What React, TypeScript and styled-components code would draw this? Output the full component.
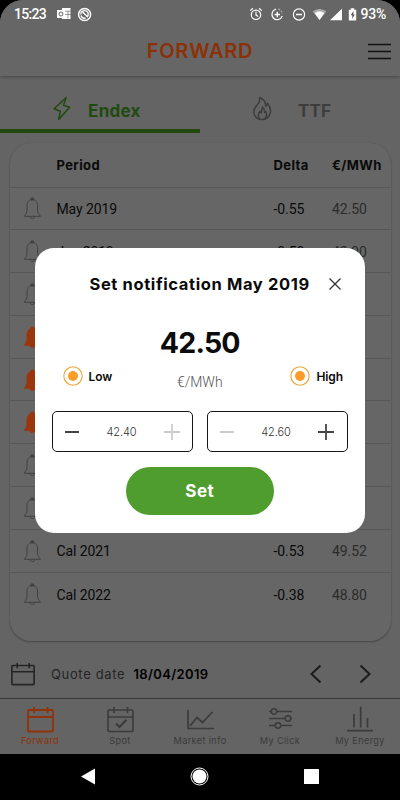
import React from "react";
import styled, { createGlobalStyle } from "styled-components";

const GlobalStyle = createGlobalStyle`
  * { box-sizing: border-box; }
  body { margin: 0; background: #000; font-family: Inter, sans-serif; }
`;

const Phone = styled.div`
  position: relative;
  width: 400px;
  height: 800px;
  overflow: hidden;
  background: #000;
  display: flex;
  flex-direction: column;
  white-space: nowrap;
`;

const Screen = styled.div`
  height: 753.5px;
  background: #646464;
  border-radius: 23px 23px 0 0;
  overflow: hidden;
  display: flex;
  flex-direction: column;
`;

const Top = styled.header`
  flex: none;
  height: 76px;
  background: #666;
  box-shadow: 0 1px 3px rgba(0, 0, 0, 0.3);
`;

const StatusBar = styled.div`
  height: 28px;
  padding: 0 14px;
  display: flex;
  align-items: center;
  color: #fff;
  font: 500 14px Roboto, sans-serif;
  svg { display: block; flex: none; }
`;

const Clock = styled.span`
  width: 43px;
  letter-spacing: -0.7px;
  font-size: 14px;
`;

const StatusIcons = styled.div`
  display: flex;
  align-items: center;
`;

const Battery = styled.span`
  padding-left: 3px;
  letter-spacing: -0.2px;
`;

const StatusRight = styled(StatusIcons)`
  margin-left: auto;
`;

const TitleRow = styled.div`
  height: 47px;
  display: grid;
  grid-template-columns: 1fr auto 1fr;
  align-items: center;
  padding: 0 9px;
  svg { justify-self: end; display: block; }
`;

const Title = styled.h1`
  grid-column: 2;
  margin: -2px 0 0;
  font: 600 20px Inter, sans-serif;
  letter-spacing: 0.75px;
  color: #8c3008;
`;

const Tabs = styled.nav`
  flex: none;
  height: 57px;
  display: grid;
  grid-template-columns: 200px 200px;
`;

const Tab = styled.div<{ $active?: boolean }>`
  display: flex;
  align-items: center;
  padding-left: 51px;
  padding-top: 12px;
  border-bottom: 4px solid ${(p) => (p.$active ? "#22490f" : "transparent")};
  color: ${(p) => (p.$active ? "#204a0f" : "#3d3d3d")};
  font-weight: 700;
  font-size: 17px;
  svg { display: block; margin-top: -1px; }
`;

const TabLabel = styled.span<{ $gap: number; $spacing: number }>`
  margin-left: ${(p) => p.$gap}px;
  letter-spacing: ${(p) => p.$spacing}px;
  padding-top: 4px;
`;

const Card = styled.section`
  flex: none;
  height: 498px;
  margin: 10px 9.5px 0;
  border-radius: 21px;
  background: #666;
  box-shadow: 0 1px 2px rgba(0, 0, 0, 0.3), 0 0 1px rgba(0, 0, 0, 0.08);
`;

const Row = styled.div<{ $head?: boolean }>`
  height: ${(p) => (p.$head ? "44.5px" : "42.8px")};
  display: grid;
  grid-template-columns: 47px 217px 58.5px 1fr;
  align-items: center;
  padding-top: 1px;
  border-bottom: 1px solid #575757;
  color: #0a0a0a;
  font: ${(p) => (p.$head ? "700 13px Inter" : "400 14px Roboto")}, sans-serif;
  letter-spacing: ${(p) => (p.$head ? "0.4px" : "-0.1px")};
  &:last-child { border-bottom: 0; }
  svg { display: block; margin-left: 13px; }
`;

const Price = styled.span`
  color: #2b2b2b;
`;

const Quote = styled.div`
  flex: 1;
  display: flex;
  align-items: center;
  padding: 9px 29px 0 11px;
  font-size: 13px;
  color: #242424;
  svg { display: block; }
`;

const QuoteLabel = styled.span`
  margin-left: 16px;
  width: 82.5px;
  letter-spacing: 0.65px;
`;

const QuoteDate = styled.b`
  color: #000;
  font-weight: 600;
  font-size: 13px;
  line-height: 16px;
  letter-spacing: 0.35px;
`;

const Arrows = styled.div`
  margin-left: auto;
  display: flex;
  gap: 37px;
`;

const BottomBar = styled.nav`
  flex: none;
  height: 56px;
  border-top: 1px solid #383838;
  display: grid;
  grid-template-columns: repeat(5, 80px);
`;

const BottomItem = styled.div<{ $active?: boolean }>`
  display: flex;
  flex-direction: column;
  align-items: center;
  padding-top: 7px;
  color: ${(p) => (p.$active ? "#8f330b" : "#3b3b3b")};
  font-size: 9.2px;
  line-height: 12px;
  letter-spacing: 0.35px;
  svg { display: block; margin-bottom: 2px; }
`;

const SystemNav = styled.div`
  flex: 1;
  display: flex;
  justify-content: center;
  align-items: center;
  gap: 95px;
  padding-right: 1px;
  svg { display: block; }
`;

const Dialog = styled.section`
  position: absolute;
  left: 34.5px;
  top: 247.5px;
  width: 330.5px;
  height: 285px;
  border-radius: 19px;
  background: #fff;
  color: #0b0b0b;
  display: flex;
  flex-direction: column;
`;

const DialogHead = styled.div`
  height: 73.5px;
  display: flex;
  align-items: center;
  justify-content: space-between;
  padding: 0 23px 0 55px;
  svg { display: block; }
`;

const DialogTitle = styled.h2`
  margin: 0;
  font-size: 16.5px;
  font-weight: 700;
  letter-spacing: 0.62px;
`;

const Levels = styled.div`
  height: 90px;
  display: grid;
  grid-template-columns: 95px 1fr 95px;
  padding: 0 22px 0 28px;
`;

const Level = styled.div<{ $end?: boolean }>`
  display: flex;
  align-items: center;
  justify-content: ${(p) => (p.$end ? "flex-end" : "flex-start")};
  align-self: start;
  margin-top: 45px;
  gap: 6px;
  font-size: 12px;
  font-weight: 600;
  letter-spacing: -0.1px;
  svg { display: block; }
`;

const Current = styled.div`
  display: flex;
  flex-direction: column;
  align-items: center;
  margin-left: -6px;
`;

const Amount = styled.strong`
  font-size: 28.5px;
  line-height: 43px;
  font-weight: 700;
  letter-spacing: -0.8px;
`;

const Unit = styled.span`
  font: 300 14px/16px Roboto, sans-serif;
  color: #555;
  margin-top: 10px;
`;

const Steppers = styled.div`
  display: flex;
  justify-content: space-between;
  padding: 0 17.5px;
`;

const Stepper = styled.div`
  width: 141px;
  height: 41px;
  border: 1px solid #151515;
  border-radius: 5px;
  display: flex;
  align-items: center;
  justify-content: space-between;
  padding: 0 12px;
  font-size: 11px;
  font-weight: 300;
  color: #333;
  letter-spacing: -0.1px;
  svg { display: block; }
`;

const SetButton = styled.button`
  align-self: center;
  margin: 14.5px 0 0;
  padding: 0;
  width: 148px;
  height: 48.5px;
  border: 0;
  border-radius: 25px;
  background: #4f9d2f;
  color: #fff;
  font: 700 17px Inter, sans-serif;
  letter-spacing: 0.5px;
`;

const Bell = ({ on }: { on?: boolean }) => (
  <svg width="19" height="23" viewBox="0 0 19 23" fill={on ? "#9a360c" : "none"} stroke={on ? "#9a360c" : "#414141"} strokeWidth="1">
    <path d="M9.3 2.5C5.5 2.5 4 5.6 4 9v4.5c0 2.5-1.2 3.2-2.6 5.8h16c-1.4-2.6-2.8-3.3-2.8-5.8V9c0-3.4-1.5-6.5-5.3-6.5Z" />
    <path d="M7 19.5c0 2.7 4.7 2.7 4.7 0" />
    <path d="M8 1h2.6v2H8z" fill={on ? "#9a360c" : "#414141"} />
  </svg>
);

const Calendar = ({ width, height, check, stroke = 1.6 }: { width: number; height: number; check?: boolean; stroke?: number }) => (
  <svg width={width} height={height} viewBox="0 0 27 26" fill="none" stroke="currentColor" strokeWidth={stroke}>
    <rect x="1" y="3.5" width="25" height="21.5" rx="1" />
    <path d="M1 10.5h25M7 .5v6M20.5 .5v6" />
    {check && <path d="m9 17 3.5 3.5 7-7.2" strokeWidth="2" />}
  </svg>
);

const Radio = () => (
  <svg width="20" height="20" viewBox="0 0 20 20">
    <circle cx="10" cy="10" r="9.2" fill="none" stroke="#eda63d" strokeWidth="1.1" />
    <circle cx="10" cy="10" r="5" fill="#fb9d28" />
  </svg>
);

const Sign = ({ plus, color }: { plus?: boolean; color: string }) => (
  <svg width={plus ? 16 : 14} height="16" viewBox={plus ? "0 0 16 16" : "0 0 14 16"} stroke={color} strokeWidth={plus ? 1.8 : 2}>
    <path d={plus ? "M0 8h16M8 0v16" : "M0 8h14"} />
  </svg>
);

type Quotation = { period?: string; delta?: string; price?: string; on?: boolean };

const rows: Quotation[] = [
  { period: "May 2019", delta: "-0.55", price: "42.50" },
  { period: "Jun 2019", delta: "-0.50", price: "42.90" },
  {},
  { on: true },
  { on: true },
  { on: true },
  {},
  {},
  { period: "Cal 2021", delta: "-0.53", price: "49.52" },
  { period: "Cal 2022", delta: "-0.38", price: "48.80" },
];

const LeftStatusIcons = () => (
  <svg width="37" height="15" viewBox="0 0 37 15">
    <path d="M5 1h8.5v11H5z" fill="#fff" />
    <path d="M8 4.2h6M8 7.4h6M11 4v7.5" stroke="#707070" strokeWidth=".7" />
    <path d="M0 3h8v8H0z" fill="#fff" />
    <circle cx="4" cy="7" r="2" fill="none" stroke="#666" />
    <circle cx="27.6" cy="7.5" r="6" fill="none" stroke="#fff" strokeWidth="1.5" />
    <path d="M23.8 7.5a3.7 3.7 0 0 1 7.4-.4c0 1.1-.2 1.8-.8 2.6l-5-5" fill="none" stroke="#fff" strokeWidth="1.4" />
    <path d="M24 8.5c.7 2 2.6 3 4.6 2.7" fill="none" stroke="#fff" strokeWidth="1.4" />
  </svg>
);

const RightStatusIcons = () => (
  <svg width="108" height="15" viewBox="0 0 108 15" fill="none" stroke="#fff" strokeWidth="1.2">
    <circle cx="7" cy="7.8" r="4.7" />
    <path d="M7 4.8v3.3l2.2 1.3M1.2 3.6 4 1.3M12.8 3.6 10 1.3" />
    <path d="M27 2.2a5.3 5.3 0 1 0 6.3 6.7" />
    <path d="M29.2 2.2a5.3 5.3 0 0 1 4.2 4.6" stroke="#aaa" strokeDasharray="2 1" />
    <path d="M28.3 4.8v5.4M25.6 7.5H31" strokeWidth="1.4" />
    <circle cx="50" cy="7.5" r="5.6" />
    <path d="M47 7.5h6" strokeWidth="1.4" />
    <path d="M63.7 4.5c4-3.4 9.6-3.4 13.6 0L70.5 13Z" fill="#aaa" stroke="none" />
    <path d="M65.7 6.1c3-2.1 6.6-2.1 9.6 0L70.5 13Z" fill="#fff" stroke="none" />
    <path d="M81 13.3 93 1.7v11.6Z" fill="#fff" stroke="none" />
    <path d="M99.8 2.8h2V1.3h3.4v1.5h2v10.7h-7.4Z" fill="#fff" stroke="none" />
    <path d="m104.5 4-2.8 4.2h1.6v3.5l2.5-4.3h-1.5Z" fill="#555" stroke="none" />
  </svg>
);

export default function App() {
  return (
    <>
      <GlobalStyle />
      <Phone>
        <Screen>
          <Top>
            <StatusBar>
              <Clock>15:23</Clock>
              <StatusIcons><LeftStatusIcons /></StatusIcons>
              <StatusRight>
                <RightStatusIcons />
                <Battery>93%</Battery>
              </StatusRight>
            </StatusBar>
            <TitleRow>
              <Title>FORWARD</Title>
              <svg width="23" height="17" viewBox="0 0 23 17" stroke="#111" strokeWidth="1.5">
                <path d="M0 1.5h23M0 8.5h23M0 15.5h23" />
              </svg>
            </TitleRow>
          </Top>
          <Tabs>
            <Tab $active>
              <svg width="22" height="25" viewBox="0 0 22 25" fill="none" stroke="currentColor" strokeWidth="1.5" strokeLinejoin="round">
                <path d="M15.2 1.5 3 12.8l6.3 2.4L7.700 23.5l11-12.2-6.3-2Z" />
              </svg>
              <TabLabel $gap={15} $spacing={0.3}>Endex</TabLabel>
            </Tab>
            <Tab>
              <svg width="22" height="25" viewBox="0 0 22 25" fill="none" stroke="currentColor" strokeWidth="1.5" strokeLinejoin="round">
                <path d="M8.5 1.5c5 2 6.5 5.5 6.3 9 1-.8 1.5-1.8 1.6-3.2 2.5 3 3.6 6.2 3 9.3-.7 4-4.2 7-8.4 7s-8-3-8.2-7.3C2.6 12 5.6 9.8 7.5 7.1 8.7 5.3 8.9 3.5 8.5 1.5Z" />
                <path d="M8.8 23c-3-3.5-1.2-6 .2-7.7l1.3 1.7c.5-2.4.5-4.5 1.2-6 2 2.2 2 4 2.2 5.6l1.2-1c1.5 3.3.8 5.7-1.7 7.7" />
              </svg>
              <TabLabel $gap={25} $spacing={0.2}>TTF</TabLabel>
            </Tab>
          </Tabs>
          <Card>
            <Row $head><span /><span>Period</span><span>Delta</span><span>€/MWh</span></Row>
            {rows.map((r, i) => (
              <Row key={i}>
                <Bell on={r.on} />
                <span>{r.period}</span>
                <span>{r.delta}</span>
                <Price>{r.price}</Price>
              </Row>
            ))}
          </Card>
          <Quote>
            <Calendar width={24} height={24} stroke={1.8} />
            <QuoteLabel>Quote date</QuoteLabel>
            <QuoteDate>18/04/2019</QuoteDate>
            <Arrows>
              <svg width="12" height="20" viewBox="0 0 12 20" fill="none" stroke="#1c1c1c" strokeWidth="2"><path d="m10.5 1.5-9 8.5 9 8.5" /></svg>
              <svg width="12" height="20" viewBox="0 0 12 20" fill="none" stroke="#1c1c1c" strokeWidth="2"><path d="m1.5 1.5 9 8.5-9 8.5" /></svg>
            </Arrows>
          </Quote>
          <BottomBar>
            <BottomItem $active><Calendar width={27} height={27} stroke={1.8} />Forward</BottomItem>
            <BottomItem><Calendar width={27} height={27} check />Spot</BottomItem>
            <BottomItem>
              <svg width="27" height="27" viewBox="0 0 27 27" fill="none" stroke="currentColor" strokeWidth="1.7"><path d="M1 4v18.5h26M3 20l7-8.5 5.5 5L25.500 6" /></svg>
              Market info
            </BottomItem>
            <BottomItem>
              <svg width="23" height="27" viewBox="0 0 23 27" fill="none" stroke="currentColor" strokeWidth="1.5">
                <path d="M0 5.5h2m6 0h15M0 12.5h16m6 0h1M0 19.5h6m6 0h11" />
                <circle cx="5" cy="5.5" r="2.7" /><circle cx="19" cy="12.5" r="2.7" /><circle cx="9" cy="19.5" r="2.7" />
              </svg>
              My Click
            </BottomItem>
            <BottomItem>
              <svg width="26" height="27" viewBox="0 0 26 27" fill="none" stroke="currentColor" strokeWidth="1.7"><path d="M0 24.7h26M7 8v13.5M13.7.5v21M20.5 12v9.5" /></svg>
              My Energy
            </BottomItem>
          </BottomBar>
        </Screen>
        <SystemNav>
          <svg width="14" height="17" viewBox="0 0 14 17"><path d="M0 8.5 14 .5v16Z" fill="#fff" /></svg>
          <svg width="19" height="19" viewBox="0 0 19 19"><circle cx="9.5" cy="9.5" r="8.5" fill="none" stroke="#fff" /><circle cx="9.5" cy="9.5" r="7" fill="#fff" /></svg>
          <svg width="15" height="15" viewBox="0 0 15 15"><rect width="15" height="15" rx=".5" fill="#fff" /></svg>
        </SystemNav>
        <Dialog>
          <DialogHead>
            <DialogTitle>Set notification May 2019</DialogTitle>
            <svg width="14" height="14" viewBox="0 0 14 14" stroke="#333" strokeWidth="1.3"><path d="m1.5 1.5 11 11m0-11-11 11" /></svg>
          </DialogHead>
          <Levels>
            <Level><Radio />Low</Level>
            <Current><Amount>42.50</Amount><Unit>€/MWh</Unit></Current>
            <Level $end><Radio />High</Level>
          </Levels>
          <Steppers>
            <Stepper><Sign color="#444" />42.40<Sign plus color="#ccc" /></Stepper>
            <Stepper><Sign color="#ccc" />42.60<Sign plus color="#444" /></Stepper>
          </Steppers>
          <SetButton>Set</SetButton>
        </Dialog>
      </Phone>
    </>
  );
}
